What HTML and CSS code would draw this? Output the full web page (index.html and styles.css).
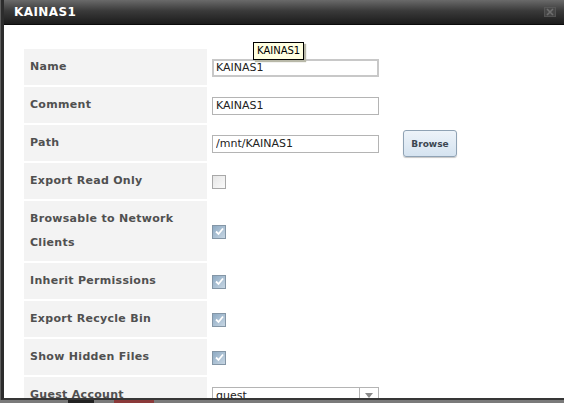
FILE: index.html
```html
<!DOCTYPE html>
<html lang="en">
<head>
  <meta charset="UTF-8">
  <title>KAINAS1</title>
  <link rel="stylesheet" href="styles.css">
</head>
<body>
  <div class="dialog">
    <div class="titlebar">
      <span class="title">KAINAS1</span>
      <svg class="close" width="12" height="10" viewBox="0 0 12 10">
        <rect x="0.5" y="0.5" width="11" height="9" fill="#4a4a4a" stroke="#5c5c5c"/>
        <path d="M3 2 L9 8 M9 2 L3 8" stroke="#7c7c7c" stroke-width="1.6"/>
      </svg>
    </div>
    <div class="content">
      <div class="form">
        <div class="label">Name</div>
        <div class="value"><input class="text focus" value="KAINAS1"></div>

        <div class="label">Comment</div>
        <div class="value"><input class="text" value="KAINAS1"></div>

        <div class="label">Path</div>
        <div class="value"><input class="text" value="/mnt/KAINAS1"><button class="browse">Browse</button></div>

        <div class="label">Export Read Only</div>
        <div class="value"><span class="check"></span></div>

        <div class="label">Browsable to Network Clients</div>
        <div class="value"><span class="check checked"><svg width="11" height="11" viewBox="0 0 11 11"><path d="M2 5.5 L4.5 8 L9 2.5" fill="none" stroke="#fff" stroke-width="1.8"/></svg></span></div>

        <div class="label">Inherit Permissions</div>
        <div class="value"><span class="check checked"><svg width="11" height="11" viewBox="0 0 11 11"><path d="M2 5.5 L4.5 8 L9 2.5" fill="none" stroke="#fff" stroke-width="1.8"/></svg></span></div>

        <div class="label">Export Recycle Bin</div>
        <div class="value"><span class="check checked"><svg width="11" height="11" viewBox="0 0 11 11"><path d="M2 5.5 L4.5 8 L9 2.5" fill="none" stroke="#fff" stroke-width="1.8"/></svg></span></div>

        <div class="label">Show Hidden Files</div>
        <div class="value"><span class="check checked"><svg width="11" height="11" viewBox="0 0 11 11"><path d="M2 5.5 L4.5 8 L9 2.5" fill="none" stroke="#fff" stroke-width="1.8"/></svg></span></div>

        <div class="label">Guest Account</div>
        <div class="value">
          <div class="select">
            <span class="select-text">guest</span>
            <span class="select-btn"><svg width="8" height="5" viewBox="0 0 8 5"><path d="M0 0 H8 L4 5 Z" fill="#8a8a8a"/></svg></span>
          </div>
        </div>
      </div>
      <div class="tooltip">KAINAS1</div>
    </div>
  </div>
  <div class="page">
    <span class="page-block"></span>
    <span class="page-red"></span>
  </div>
</body>
</html>
```

FILE: styles.css
```css
* {
  margin: 0;
  padding: 0;
  box-sizing: border-box;
}

body {
  background-color: #5f5f5f;
  font-family: "DejaVu Sans", Verdana, sans-serif;
  overflow: hidden;
  height: 403px;
}

.dialog {
  margin-left: 1px;
  height: 400px;
  border-left: 3px solid #2c2c2c;
  border-bottom: 2px solid #363636;
  background-color: #fff;
  overflow: hidden;
}

.titlebar {
  height: 25px;
  display: flex;
  align-items: center;
  justify-content: space-between;
  padding: 0 8px 1px 10px;
  background: linear-gradient(#6a6a6a, #3a3a3a 45%, #1c1c1c);
  border-bottom: 1px solid #0c0c0c;
}

.title {
  color: #fff;
  font-weight: bold;
  font-size: 12px;
  letter-spacing: 0.4px;
}

.close {
  opacity: 0.8;
}

.content {
  position: relative;
  padding: 24px 0 0 20px;
}

.form {
  display: grid;
  grid-template-columns: 183px 1fr;
  row-gap: 2px;
}

.label {
  background-color: #f3f3f3;
  color: #505050;
  font-weight: bold;
  font-size: 11px;
  line-height: 24px;
  padding: 6px 30px 6px 6px;
  letter-spacing: 0.3px;
}

.value {
  display: flex;
  align-items: center;
  padding-left: 5px;
  padding-top: 1px;
}

.text {
  width: 167px;
  height: 18px;
  border: 1px solid #b4b4b4;
  padding: 0 3px;
  font-family: "DejaVu Sans", Verdana, sans-serif;
  font-size: 11px;
  color: #222;
  outline: none;
}

.text.focus {
  border: 2px solid #c8c8c8;
  padding: 0 2px;
}

.browse {
  margin-left: 24px;
  width: 54px;
  height: 27px;
  border: 1px solid #8fa2b4;
  border-radius: 3px;
  background: linear-gradient(#edf3f9, #d5e3f0);
  box-shadow: 0 1px 1px #c6c6c6;
  color: #3b4650;
  font-family: "DejaVu Sans", Verdana, sans-serif;
  font-weight: bold;
  font-size: 9px;
}

.check {
  display: flex;
  align-items: center;
  justify-content: center;
  width: 14px;
  height: 14px;
  border: 1px solid #a8a8a8;
  background: linear-gradient(135deg, #e6e6e6, #fafafa);
}

.check.checked {
  border-color: #8496a6;
  background: linear-gradient(135deg, #8eaac3, #c7d6e3);
}

.select {
  display: flex;
  width: 167px;
  height: 18px;
  border: 1px solid #b4b4b4;
  font-size: 11px;
  color: #222;
}

.select-text {
  flex: 1;
  padding: 1px 3px;
}

.select-btn {
  width: 19px;
  border-left: 1px solid #b4b4b4;
  display: flex;
  align-items: center;
  justify-content: center;
}

.tooltip {
  position: absolute;
  left: 249px;
  top: 17px;
  padding: 1px 3px;
  border: 1px solid #000;
  background-color: #ffffe1;
  box-shadow: 2px 2px 1px #b8b8a8;
  font-family: "DejaVu Sans", Verdana, sans-serif;
  font-size: 10px;
  line-height: 14px;
  color: #000;
}

.page {
  display: flex;
  gap: 20px;
  height: 3px;
  padding-left: 68px;
  background-color: #7a7a7a;
}

.page-block {
  width: 26px;
  background-color: #222;
}

.page-red {
  width: 40px;
  background-color: #8b3a3a;
}
```
